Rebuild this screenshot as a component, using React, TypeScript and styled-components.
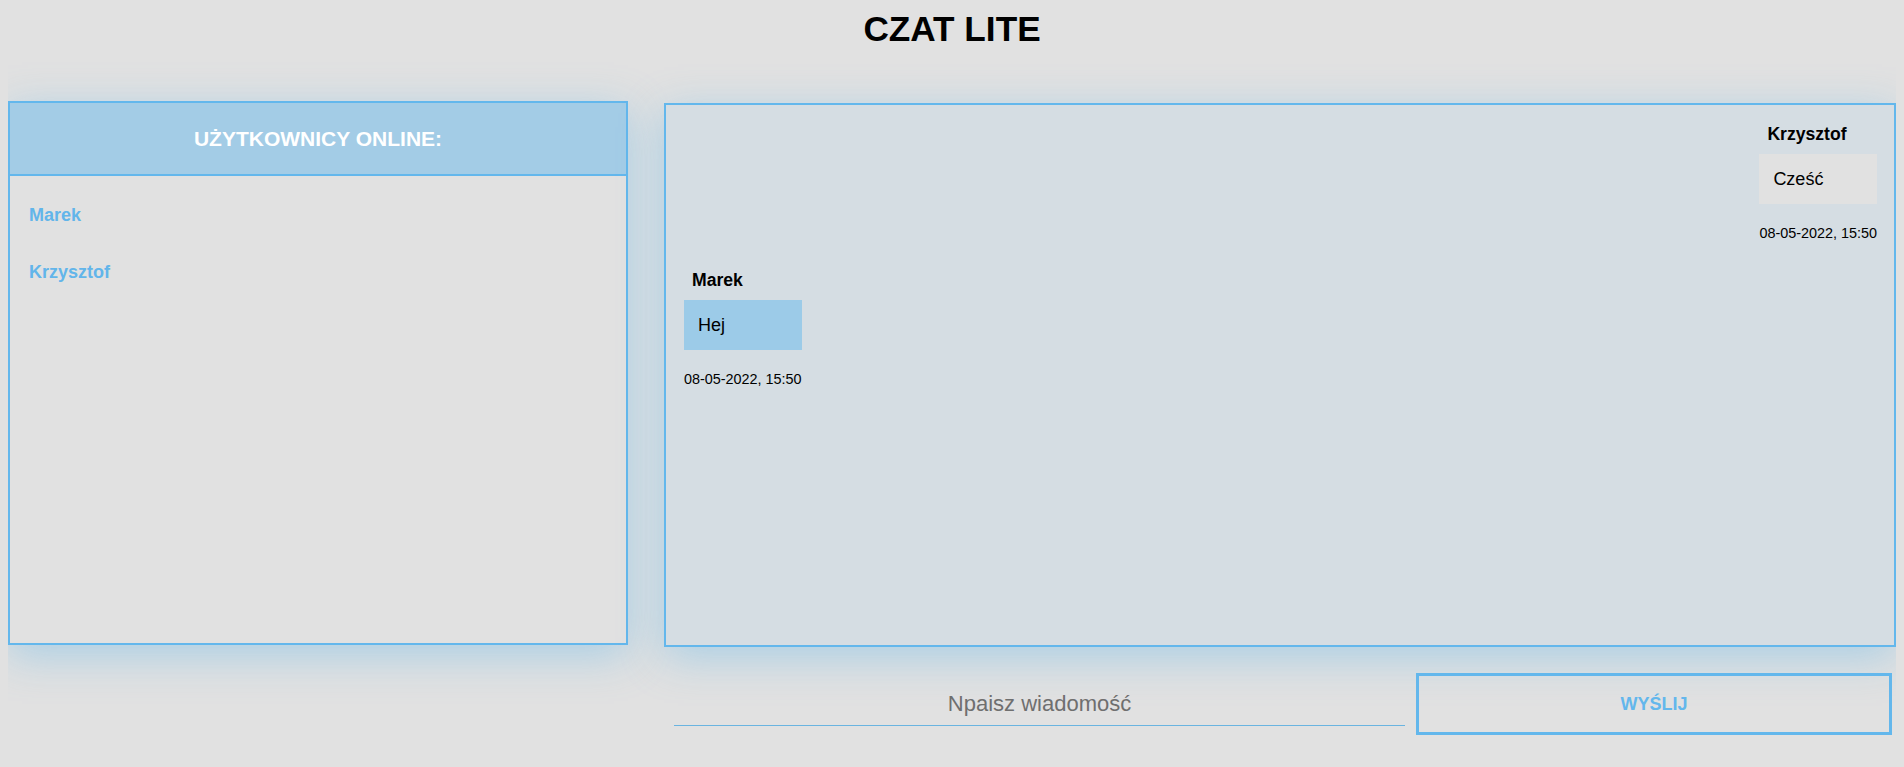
import { createGlobalStyle, styled } from 'styled-components';

const BLUE = '#63b7ec';

const GlobalStyle = createGlobalStyle`
  body {
    margin: 8px;
    background: #e1e1e1;
    font-family: 'Liberation Sans', Arial, sans-serif;
    color: #000;
  }
`;

type Message = {
  id: number;
  author: string;
  text: string;
  date: string;
  own: boolean;
};

const users = ['Marek', 'Krzysztof'];

const messages: Message[] = [
  { id: 1, author: 'Krzysztof', text: 'Cześć', date: '08-05-2022, 15:50', own: true },
  { id: 2, author: 'Marek', text: 'Hej', date: '08-05-2022, 15:50', own: false },
];

export default function App() {
  return (
    <>
      <GlobalStyle />
      <SC.Title>CZAT LITE</SC.Title>
      <SC.Main>
        <SC.UsersPanel>
          <SC.UsersHeader>UŻYTKOWNICY ONLINE:</SC.UsersHeader>
          <SC.UsersList>
            {users.map((name) => (
              <SC.User key={name}>{name}</SC.User>
            ))}
          </SC.UsersList>
        </SC.UsersPanel>

        <SC.ChatColumn>
          <SC.ChatPanel>
            {messages.map((m) => (
              <SC.Message key={m.id} $own={m.own}>
                <SC.Author>{m.author}</SC.Author>
                <SC.Bubble $own={m.own}>{m.text}</SC.Bubble>
                <SC.Time>{m.date}</SC.Time>
              </SC.Message>
            ))}
          </SC.ChatPanel>

          <SC.Form onSubmit={(e) => e.preventDefault()}>
            <SC.Input placeholder='Npaisz wiadomość' />
            <SC.SendButton type='submit'>WYŚLIJ</SC.SendButton>
          </SC.Form>
        </SC.ChatColumn>
      </SC.Main>
    </>
  );
}

const panelShadow = '0 10px 40px rgba(99, 184, 236, 0.45)';

const SC = {
  Title: styled.h1`
    margin: 1px 0 0;
    text-align: center;
    font-size: 35.2px;
    font-weight: 700;
    line-height: normal;
  `,
  Main: styled.main`
    display: grid;
    grid-template-columns: 620px 1fr;
    column-gap: 36px;
    margin-top: 52px;
    align-items: start;
  `,
  UsersPanel: styled.section`
    box-sizing: border-box;
    height: 544px;
    border: 2px solid ${BLUE};
    box-shadow: ${panelShadow};
    display: flex;
    flex-direction: column;
  `,
  UsersHeader: styled.h2`
    margin: 0;
    height: 71px;
    display: flex;
    align-items: center;
    justify-content: center;
    background: #a3cce6;
    border-bottom: 2px solid ${BLUE};
    color: #fff;
    font-size: 21px;
    font-weight: 700;
  `,
  UsersList: styled.ul`
    list-style: none;
    margin: 0;
    padding: 29px 19px;
    display: flex;
    flex-direction: column;
    gap: 36px;
  `,
  User: styled.li`
    font-size: 18px;
    font-weight: 700;
    color: #62b5ea;
  `,
  ChatColumn: styled.div`
    margin-top: 2px;
    display: flex;
    flex-direction: column;
  `,
  ChatPanel: styled.section`
    box-sizing: border-box;
    height: 544px;
    border: 2px solid ${BLUE};
    background: #d5dde3;
    box-shadow: ${panelShadow};
    padding: 19px 17px 0 18px;
    display: flex;
    flex-direction: column;
    gap: 29px;
  `,
  Message: styled.div<{ $own: boolean }>`
    align-self: ${({ $own }) => ($own ? 'flex-end' : 'flex-start')};
    display: flex;
    flex-direction: column;
  `,
  Author: styled.span`
    padding-left: 8px;
    margin-bottom: 9px;
    font-size: 17.6px;
    font-weight: 700;
  `,
  Bubble: styled.div<{ $own: boolean }>`
    padding: 15px 14px;
    font-size: 18px;
    line-height: 20px;
    background: ${({ $own }) => ($own ? '#e1e1e1' : '#9ccbe8')};
  `,
  Time: styled.span`
    margin-top: 21px;
    font-size: 14.4px;
    white-space: nowrap;
  `,
  Form: styled.form`
    margin-top: 26px;
    display: grid;
    grid-template-columns: 731fr 476fr;
    column-gap: 11px;
    padding: 0 4px 0 10px;
    align-items: center;
  `,
  Input: styled.input`
    min-width: 0;
    box-sizing: border-box;
    padding: 8px 0;
    border: none;
    border-bottom: 1px solid #6ab4e0;
    background: transparent;
    font-family: 'Liberation Sans', Arial, sans-serif;
    font-size: 22px;
    text-align: center;
    outline: none;

    &::placeholder {
      color: #6f6f6f;
    }
  `,
  SendButton: styled.button`
    box-sizing: border-box;
    height: 62px;
    border: 3px solid ${BLUE};
    background: transparent;
    color: ${BLUE};
    font-family: 'Liberation Sans', Arial, sans-serif;
    font-size: 18px;
    font-weight: 700;
    cursor: pointer;
  `,
};
